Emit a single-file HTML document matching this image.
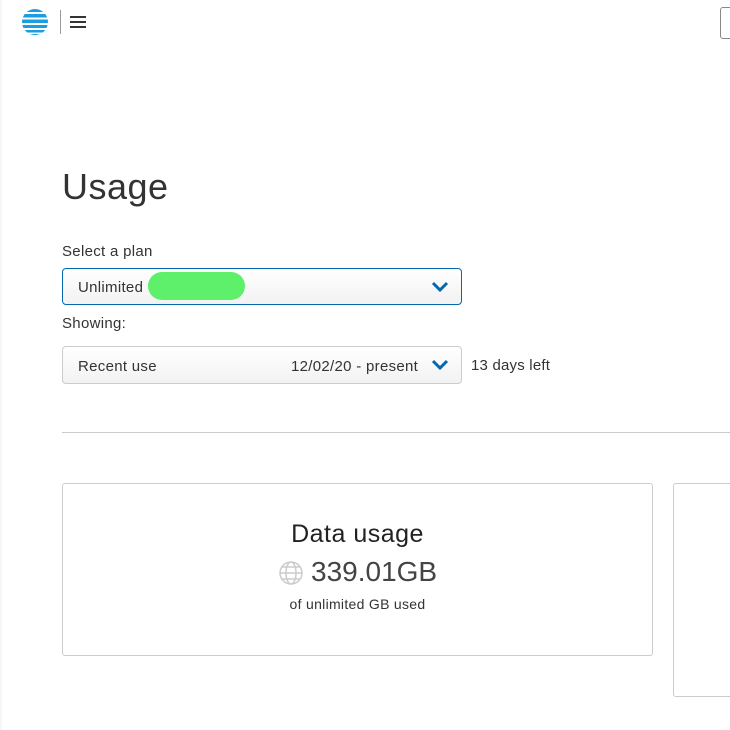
<!DOCTYPE html>
<html><head><meta charset="utf-8"><style>
body{margin:0;width:730px;height:730px;overflow:hidden;background:#fff;font-family:"Liberation Sans",sans-serif;color:#333;position:relative}
.abs{position:absolute}
.lb{position:absolute;left:0;top:0;width:2px;height:730px;background:#f6f6f6}
.dd{position:absolute;left:62px;width:398px;height:36px;border-radius:4px;background:linear-gradient(#fff,#f2f2f2);font-size:15px;color:#333;letter-spacing:0.3px}
.dd span{position:absolute;top:10px}
.chev{position:absolute;right:12px;top:12px}
</style></head><body>
<div class="lb"></div>
<svg class="abs" style="left:21px;top:8px" width="28" height="28" viewBox="0 0 28 28">
<defs><clipPath id="c"><circle cx="14" cy="14" r="13"/></clipPath></defs>
<g clip-path="url(#c)" fill="#1a9ee0">
<rect x="0" y="1" width="28" height="3"/><rect x="0" y="6" width="28" height="3.5"/><rect x="0" y="11.5" width="28" height="3.5"/><rect x="0" y="17" width="28" height="3"/><rect x="0" y="22" width="28" height="2.5"/><rect x="0" y="26" width="28" height="2"/>
</g></svg>
<div class="abs" style="left:60px;top:10px;width:1px;height:24px;background:#999"></div>
<div class="abs" style="left:70px;top:16px;width:16px;height:2px;background:#333"></div>
<div class="abs" style="left:70px;top:21px;width:16px;height:2px;background:#333"></div>
<div class="abs" style="left:70px;top:26px;width:16px;height:2px;background:#333"></div>
<div class="abs" style="left:720px;top:7px;width:20px;height:30px;border:1px solid #888;border-radius:3px"></div>
<div class="abs" style="left:62px;top:166px;font-size:36px;color:#333;letter-spacing:0.5px">Usage</div>
<div class="abs" style="left:62px;top:243px;font-size:15px;letter-spacing:0.3px">Select a plan</div>
<div class="dd" style="top:268px;border:1px solid #0568ae;height:35px;width:398px"><span style="left:15px">Unlimited</span>
<div class="abs" style="left:85px;top:3px;width:97px;height:28px;border-radius:14px;background:#5ef06b"></div>
<svg class="chev" width="18" height="12"><path d="M2 2l7 7 7-7" stroke="#0568ae" stroke-width="3" fill="none"/></svg></div>
<div class="abs" style="left:62px;top:315px;font-size:15px;letter-spacing:0.3px">Showing:</div>
<div class="dd" style="top:346px;border:1px solid #ccc;height:36px;width:398px"><span style="left:15px;top:11px">Recent use</span><span style="left:228px;top:11px">12/02/20 - present</span>
<svg class="chev" width="18" height="12"><path d="M2 2l7 7 7-7" stroke="#0568ae" stroke-width="3" fill="none"/></svg></div>
<div class="abs" style="left:471px;top:357px;font-size:15px;letter-spacing:0.2px">13 days left</div>
<div class="abs" style="left:62px;top:432px;width:668px;height:1px;background:#ccc"></div>
<div class="abs" style="left:62px;top:483px;width:589px;height:171px;border:1px solid #ccc;border-radius:3px"></div>
<div class="abs" style="left:673px;top:483px;width:70px;height:212px;border:1px solid #ccc;border-radius:3px"></div>
<div class="abs" style="left:62px;top:520px;width:591px;text-align:center;font-size:25px;color:#222;letter-spacing:0.5px">Data usage</div>
<svg class="abs" style="left:278px;top:560px" width="26" height="26" viewBox="0 0 26 26" fill="none" stroke="#ccc" stroke-width="1.5"><circle cx="13" cy="13" r="11"/><ellipse cx="13" cy="13" rx="5" ry="11"/><path d="M2 13h22M4 7h18M4 19h18"/></svg>
<div class="abs" style="left:311px;top:556px;font-size:28px;color:#444">339.01GB</div>
<div class="abs" style="left:62px;top:596px;width:591px;text-align:center;font-size:14px;letter-spacing:0.3px">of unlimited GB used</div>
</body></html>
